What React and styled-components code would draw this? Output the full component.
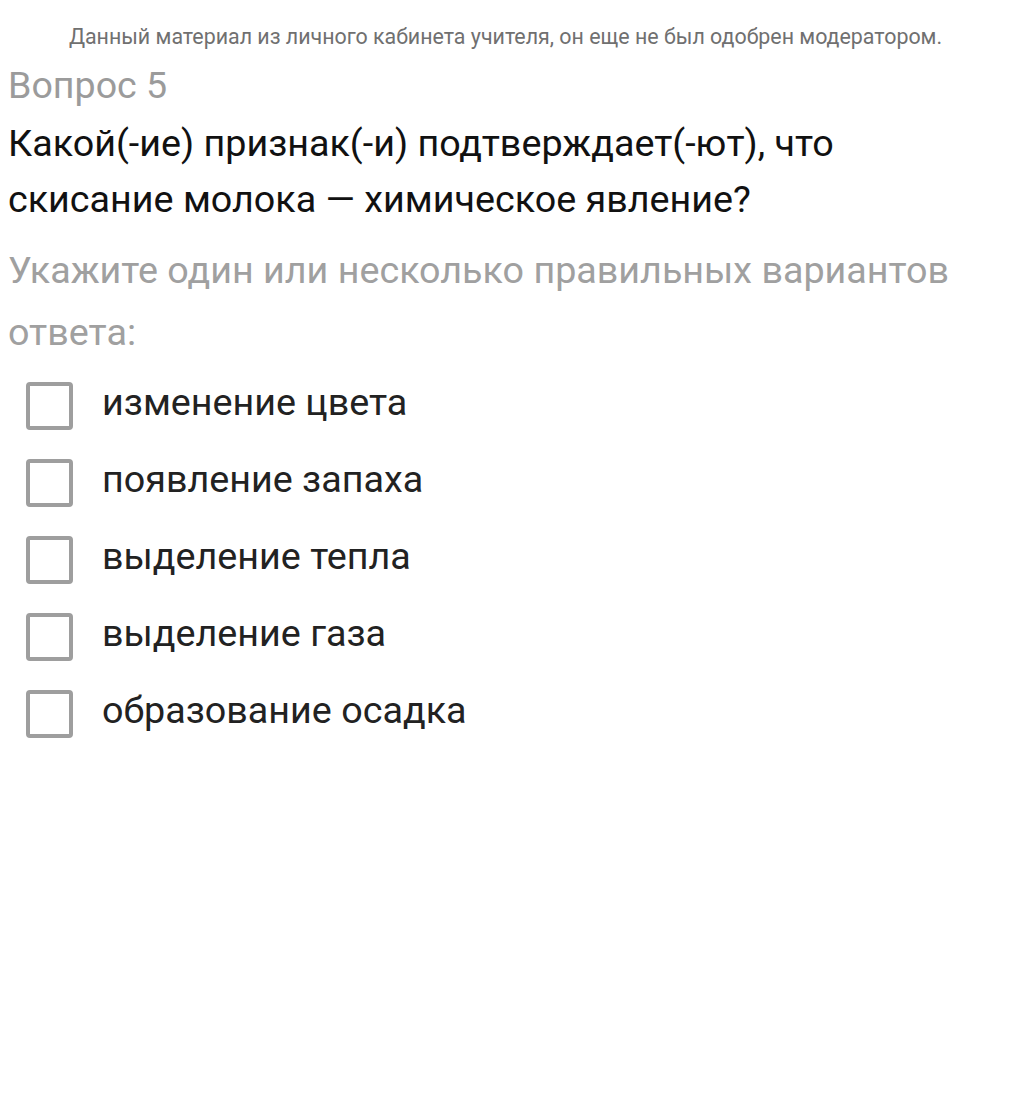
import React from "react";
import styled, { createGlobalStyle } from "styled-components";

const Global = createGlobalStyle`
  html, body { margin: 0; padding: 0; background: #fff; }
  body { font-family: Roboto, "Noto Sans", sans-serif; }
`;

const Page = styled.div`
  padding: 0 8px;
  width: 995px;
  display: flex;
  flex-direction: column;
`;

const Notice = styled.div`
  text-align: center;
  font-size: 21.4px;
  color: #707070;
  line-height: 26px;
  padding-top: 24px;
`;

const QNumber = styled.div`
  font-size: 37.6px;
  color: #9b9b9b;
  line-height: 48px;
  margin-top: 11px;
`;

const QText = styled.div`
  font-size: 37.7px;
  color: #111;
  line-height: 56px;
  margin-top: 6px;
`;

const Hint = styled.div`
  font-size: 37.7px;
  color: #a0a0a0;
  line-height: 62px;
  margin-top: 12px;
`;

const Options = styled.div`
  display: flex;
  flex-direction: column;
  gap: 29px;
  padding-left: 18px;
  margin-top: 19px;
`;

const Option = styled.label`
  display: flex;
  align-items: flex-start;
  gap: 29px;
  font-size: 37.7px;
  line-height: 40px;
  color: #222;
  height: 48px;
`;

const Box = styled.span`
  box-sizing: border-box;
  width: 47px;
  height: 48px;
  border: 4px solid #9e9e9e;
  border-radius: 4px;
  flex-shrink: 0;
`;

const options = [
  "изменение цвета",
  "появление запаха",
  "выделение тепла",
  "выделение газа",
  "образование осадка",
];

export default function App() {
  return (
    <>
      <Global />
      <Page>
        <Notice>Данный материал из личного кабинета учителя, он еще не был одобрен модератором.</Notice>
        <QNumber>Вопрос 5</QNumber>
        <QText>Какой(-ие) признак(-и) подтверждает(-ют), что скисание молока — химическое явление?</QText>
        <Hint>Укажите один или несколько правильных вариантов ответа:</Hint>
        <Options>
          {options.map((o) => (
            <Option key={o}>
              <Box />
              {o}
            </Option>
          ))}
        </Options>
      </Page>
    </>
  );
}
